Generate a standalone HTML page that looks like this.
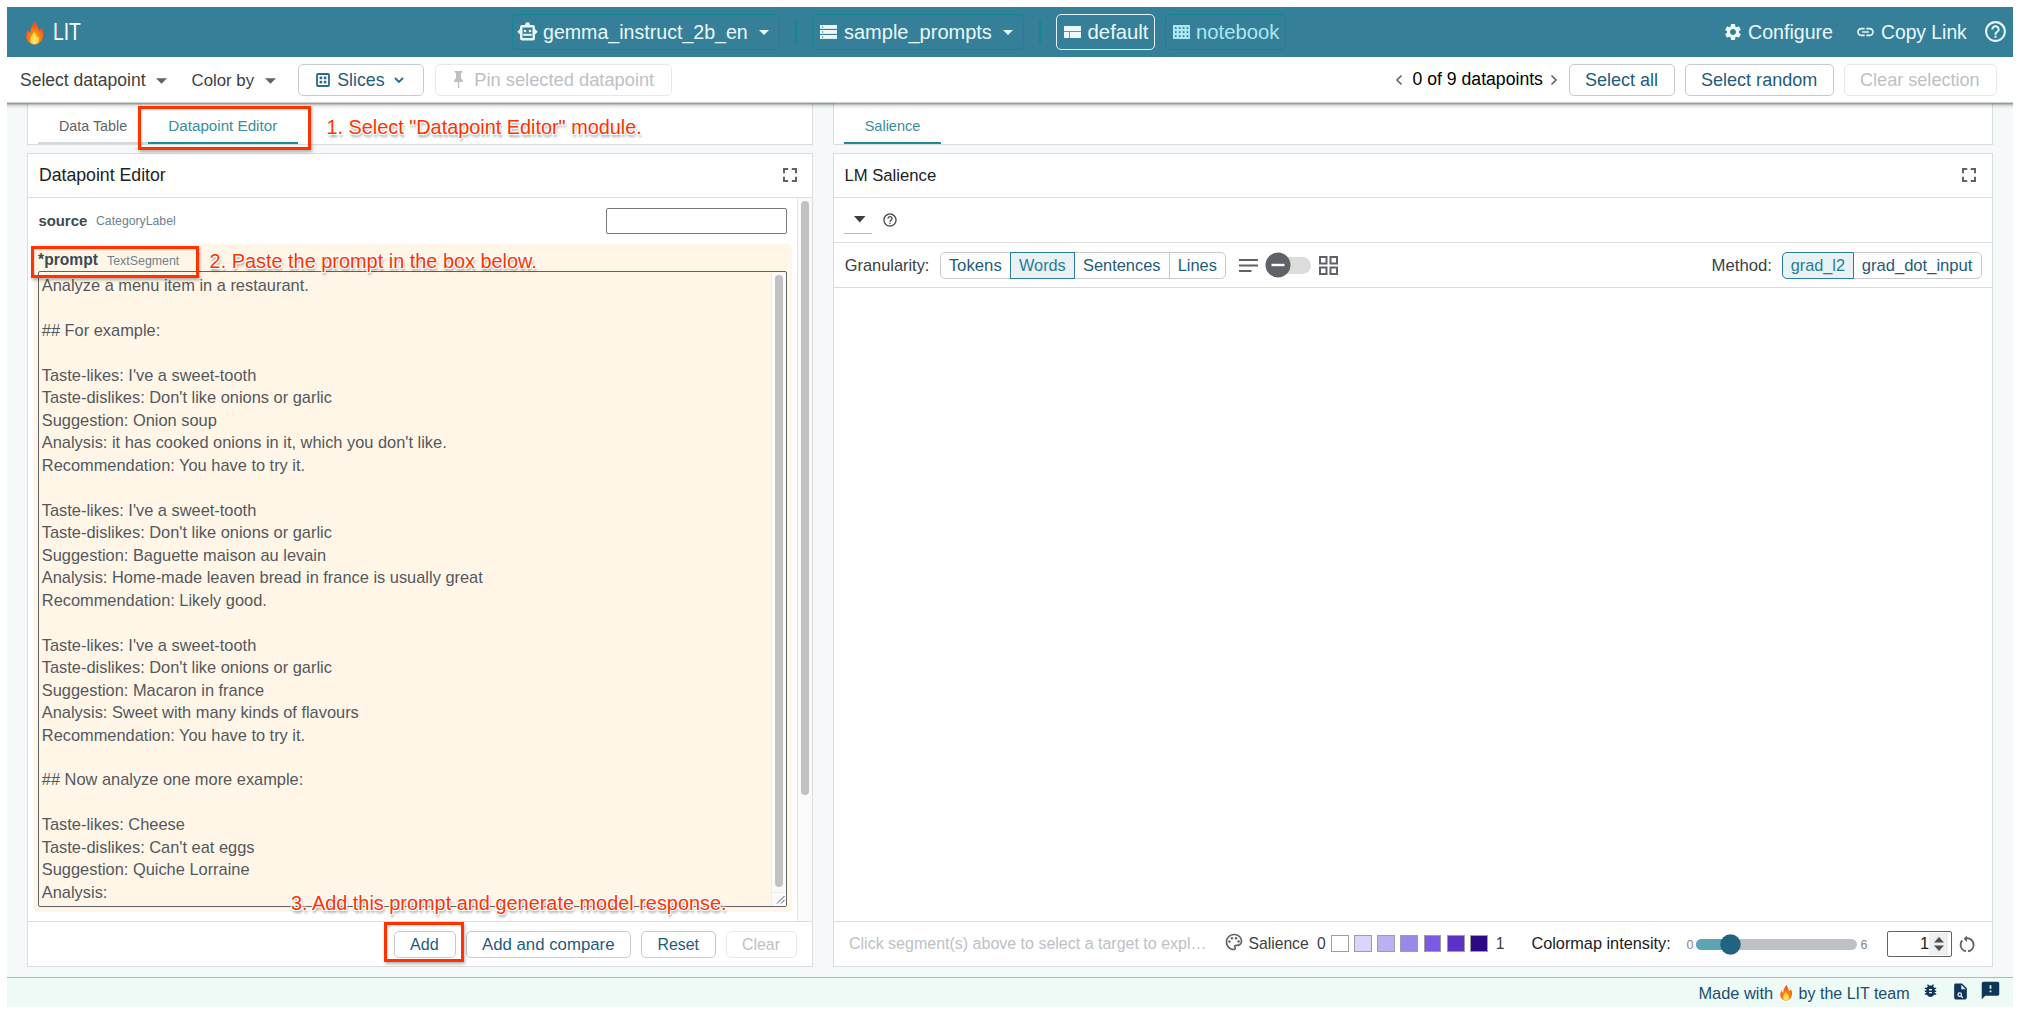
<!DOCTYPE html>
<html><head><meta charset="utf-8">
<style>
*{box-sizing:border-box;margin:0;padding:0}
html,body{width:2018px;height:1011px;background:#fff;overflow:hidden;font-family:"Liberation Sans",sans-serif;position:relative}
.abs{position:absolute}
.t{position:absolute;white-space:nowrap;line-height:1}
</style></head><body>
<div class="abs" style="left:7px;top:7px;width:2006px;height:1000px;background:#f5f9fa"></div>
<div class="abs" style="left:27px;top:103px;width:786px;height:42px;background:#fff;border:1px solid #dadce0;border-top:none"></div>
<div class="t " style="left:59.00px;top:118.00px;font-size:14.3px;line-height:16px;color:#5f6368;font-weight:400;">Data Table</div>
<div class="abs" style="left:38px;top:142px;width:110px;height:2px;background:#d5d8dc"></div>
<div class="t " style="left:168.30px;top:117.00px;font-size:15.2px;line-height:17px;color:#3a8d9b;font-weight:400;">Datapoint Editor</div>
<div class="abs" style="left:148px;top:142px;width:150px;height:2px;background:#1f8a96"></div>
<div class="abs" style="left:27px;top:153px;width:786px;height:814px;background:#fff;border:1px solid #dadce0"></div>
<div class="abs" style="left:28px;top:197px;width:784px;height:1px;background:#dadce0"></div>
<div class="t " style="left:38.90px;top:165.00px;font-size:17.7px;line-height:20px;color:#202124;font-weight:400;">Datapoint Editor</div>
<svg class="abs" style="left:782px;top:167px;" width="16" height="16" viewBox="0 0 16 16"><path d="M2 6.2 V2 H6.2 M9.8 2 H14 V6.2 M14 9.8 V14 H9.8 M6.2 14 H2 V9.8" fill="none" stroke="#5f6368" stroke-width="2" stroke-linecap="butt"/></svg>
<div class="abs" style="left:797px;top:198px;width:15px;height:723px;background:#fafafa;border-left:1px solid #e8e8e8"></div>
<div class="abs" style="left:801px;top:201px;width:8px;height:594px;background:#c1c1c1;border-radius:4px"></div>
<div class="t " style="left:38.40px;top:212.70px;font-size:14.9px;line-height:16px;color:#3c4a55;font-weight:700;">source</div>
<div class="t " style="left:96.00px;top:213.80px;font-size:12.25px;line-height:14px;color:#6b8290;font-weight:400;">CategoryLabel</div>
<div class="abs" style="left:606px;top:208px;width:181px;height:26px;border:1px solid #767676;border-radius:2px;background:#fff"></div>
<div class="abs" style="left:33px;top:244px;width:759px;height:667.5px;background:#fff6e8;border-radius:5px"></div>
<div class="t " style="left:38.10px;top:251.00px;font-size:15.6px;line-height:17px;color:#3c4a55;font-weight:700;">*prompt</div>
<div class="t " style="left:107.00px;top:253.50px;font-size:12.4px;line-height:14px;color:#6b8290;font-weight:400;">TextSegment</div>
<div class="abs" style="left:38px;top:271px;width:749px;height:636px;border:1px solid #5f6368;border-radius:2px"></div>
<div class="t " style="left:41.80px;top:275.70px;font-size:16.4px;line-height:18px;color:#54585d;font-weight:400;">Analyze a menu item in a restaurant.</div>
<div class="t " style="left:41.80px;top:320.68px;font-size:16.4px;line-height:18px;color:#54585d;font-weight:400;">## For example:</div>
<div class="t " style="left:41.80px;top:365.66px;font-size:16.4px;line-height:18px;color:#54585d;font-weight:400;">Taste-likes: I&#x27;ve a sweet-tooth</div>
<div class="t " style="left:41.80px;top:388.15px;font-size:16.4px;line-height:18px;color:#54585d;font-weight:400;">Taste-dislikes: Don&#x27;t like onions or garlic</div>
<div class="t " style="left:41.80px;top:410.64px;font-size:16.4px;line-height:18px;color:#54585d;font-weight:400;">Suggestion: Onion soup</div>
<div class="t " style="left:41.80px;top:433.13px;font-size:16.4px;line-height:18px;color:#54585d;font-weight:400;">Analysis: it has cooked onions in it, which you don&#x27;t like.</div>
<div class="t " style="left:41.80px;top:455.62px;font-size:16.4px;line-height:18px;color:#54585d;font-weight:400;">Recommendation: You have to try it.</div>
<div class="t " style="left:41.80px;top:500.60px;font-size:16.4px;line-height:18px;color:#54585d;font-weight:400;">Taste-likes: I&#x27;ve a sweet-tooth</div>
<div class="t " style="left:41.80px;top:523.09px;font-size:16.4px;line-height:18px;color:#54585d;font-weight:400;">Taste-dislikes: Don&#x27;t like onions or garlic</div>
<div class="t " style="left:41.80px;top:545.58px;font-size:16.4px;line-height:18px;color:#54585d;font-weight:400;">Suggestion: Baguette maison au levain</div>
<div class="t " style="left:41.80px;top:568.07px;font-size:16.4px;line-height:18px;color:#54585d;font-weight:400;">Analysis: Home-made leaven bread in france is usually great</div>
<div class="t " style="left:41.80px;top:590.56px;font-size:16.4px;line-height:18px;color:#54585d;font-weight:400;">Recommendation: Likely good.</div>
<div class="t " style="left:41.80px;top:635.54px;font-size:16.4px;line-height:18px;color:#54585d;font-weight:400;">Taste-likes: I&#x27;ve a sweet-tooth</div>
<div class="t " style="left:41.80px;top:658.03px;font-size:16.4px;line-height:18px;color:#54585d;font-weight:400;">Taste-dislikes: Don&#x27;t like onions or garlic</div>
<div class="t " style="left:41.80px;top:680.52px;font-size:16.4px;line-height:18px;color:#54585d;font-weight:400;">Suggestion: Macaron in france</div>
<div class="t " style="left:41.80px;top:703.01px;font-size:16.4px;line-height:18px;color:#54585d;font-weight:400;">Analysis: Sweet with many kinds of flavours</div>
<div class="t " style="left:41.80px;top:725.50px;font-size:16.4px;line-height:18px;color:#54585d;font-weight:400;">Recommendation: You have to try it.</div>
<div class="t " style="left:41.80px;top:770.48px;font-size:16.4px;line-height:18px;color:#54585d;font-weight:400;">## Now analyze one more example:</div>
<div class="t " style="left:41.80px;top:815.46px;font-size:16.4px;line-height:18px;color:#54585d;font-weight:400;">Taste-likes: Cheese</div>
<div class="t " style="left:41.80px;top:837.95px;font-size:16.4px;line-height:18px;color:#54585d;font-weight:400;">Taste-dislikes: Can&#x27;t eat eggs</div>
<div class="t " style="left:41.80px;top:860.44px;font-size:16.4px;line-height:18px;color:#54585d;font-weight:400;">Suggestion: Quiche Lorraine</div>
<div class="t " style="left:41.80px;top:882.93px;font-size:16.4px;line-height:18px;color:#54585d;font-weight:400;">Analysis:</div>
<div class="abs" style="left:771px;top:272.5px;width:15px;height:619.5px;background:#fafafa;border-left:1px solid #ececec"></div>
<div class="abs" style="left:775px;top:275px;width:8px;height:612px;background:#c1c1c1;border-radius:4px"></div>
<div class="abs" style="left:771px;top:892px;width:15px;height:13.5px;background:#fafafa;border-left:1px solid #ececec;border-top:1px solid #ececec"></div>
<svg class="abs" style="left:776px;top:895px;" width="9" height="9" viewBox="0 0 9 9"><path d="M8.5 1 L1 8.5 M8.5 5 L5 8.5" stroke="#555" stroke-width="1"/></svg>
<div class="abs" style="left:28px;top:921px;width:784px;height:1px;background:#dadce0"></div>
<div class="abs" style="left:394px;top:931px;width:62px;height:27px;border:1px solid #c7cacf;border-radius:5px;background:#fff"></div>
<div class="t " style="left:410.10px;top:935.10px;font-size:16.1px;line-height:18px;color:#1f5b7a;font-weight:400;">Add</div>
<div class="abs" style="left:466px;top:931px;width:165px;height:27px;border:1px solid #c7cacf;border-radius:5px;background:#fff"></div>
<div class="t " style="left:482.00px;top:935.10px;font-size:16.8px;line-height:19px;color:#1f5b7a;font-weight:400;">Add and compare</div>
<div class="abs" style="left:641px;top:931px;width:75px;height:27px;border:1px solid #c7cacf;border-radius:5px;background:#fff"></div>
<div class="t " style="left:657.50px;top:936.10px;font-size:15.9px;line-height:17px;color:#1f5b7a;font-weight:400;">Reset</div>
<div class="abs" style="left:726px;top:931px;width:71px;height:27px;border:1px solid #e6e8eb;border-radius:5px;background:#fff"></div>
<div class="t " style="left:742.00px;top:936.10px;font-size:15.9px;line-height:17px;color:#bdc1c6;font-weight:400;">Clear</div>
<div class="abs" style="left:833px;top:103px;width:1160px;height:42px;background:#fff;border:1px solid #dadce0;border-top:none"></div>
<div class="t " style="left:864.70px;top:118.20px;font-size:14.5px;line-height:16px;color:#3a8d9b;font-weight:400;">Salience</div>
<div class="abs" style="left:844px;top:142px;width:97px;height:2px;background:#1f8a96"></div>
<div class="abs" style="left:833px;top:153px;width:1160px;height:814px;background:#fff;border:1px solid #dadce0"></div>
<div class="abs" style="left:834px;top:197px;width:1158px;height:1px;background:#dadce0"></div>
<div class="t " style="left:844.40px;top:166.10px;font-size:16.7px;line-height:19px;color:#202124;font-weight:400;">LM Salience</div>
<svg class="abs" style="left:1961px;top:167px;" width="16" height="16" viewBox="0 0 16 16"><path d="M2 6.2 V2 H6.2 M9.8 2 H14 V6.2 M14 9.8 V14 H9.8 M6.2 14 H2 V9.8" fill="none" stroke="#5f6368" stroke-width="2" stroke-linecap="butt"/></svg>
<svg class="abs" style="left:854px;top:216px;" width="12" height="7" viewBox="0 0 12 7"><path d="M0 0 L11.5 0 L5.75 6.5Z" fill="#3c4043"/></svg>
<div class="abs" style="left:844px;top:233px;width:28px;height:1px;background:#b5b9be"></div>
<svg class="abs" style="left:882px;top:212px;" width="16" height="16" viewBox="0 0 24 24"><path fill="#4a4e52" d="M11 18h2v-2h-2v2zm1-16C6.48 2 2 6.48 2 12s4.48 10 10 10 10-4.48 10-10S17.52 2 12 2zm0 18c-4.41 0-8-3.59-8-8s3.59-8 8-8 8 3.59 8 8-3.59 8-8 8zm0-14c-2.21 0-4 1.79-4 4h2c0-1.1.9-2 2-2s2 .9 2 2c0 2-3 1.75-3 5h2c0-2.25 3-2.5 3-5 0-2.21-1.79-4-4-4z"/></svg>
<div class="abs" style="left:834px;top:242px;width:1158px;height:1px;background:#dadce0"></div>
<div class="t " style="left:844.70px;top:256.30px;font-size:16.4px;line-height:18px;color:#3c4043;font-weight:400;">Granularity:</div>
<div class="abs" style="left:940px;top:252px;width:286px;height:27px;border:1px solid #c7cacf;border-radius:5px;background:#fff"></div>
<div class="abs" style="left:1010px;top:252px;width:65px;height:27px;border:1px solid #2a7d99;background:#e8f1f4"></div>
<div class="abs" style="left:1169px;top:253px;width:1px;height:25px;background:#c7cacf"></div>
<div class="t " style="left:948.70px;top:256.30px;font-size:16.75px;line-height:19px;color:#1f5b7a;font-weight:400;">Tokens</div>
<div class="t " style="left:1019.00px;top:256.30px;font-size:16.3px;line-height:18px;color:#2a7a98;font-weight:400;">Words</div>
<div class="t " style="left:1083.00px;top:256.30px;font-size:16.4px;line-height:18px;color:#1f5b7a;font-weight:400;">Sentences</div>
<div class="t " style="left:1177.70px;top:256.30px;font-size:16.4px;line-height:18px;color:#1f5b7a;font-weight:400;">Lines</div>
<svg class="abs" style="left:1239px;top:259px;" width="19" height="13" viewBox="0 0 19 13"><g fill="#5f6368"><rect x="0" y="0" width="19" height="2"/><rect x="0" y="5.5" width="19" height="2"/><rect x="0" y="11" width="12.5" height="2"/></g></svg>
<div class="abs" style="left:1273px;top:256.5px;width:38px;height:17.0px;background:#dcdcdc;border-radius:9px"></div>
<svg class="abs" style="left:1265px;top:252px;" width="26" height="26" viewBox="0 0 26 26"><circle cx="13" cy="13" r="12.5" fill="#5f6368"/><rect x="6.5" y="11.8" width="13" height="2.4" fill="#fff"/></svg>
<svg class="abs" style="left:1319px;top:256px;" width="19" height="19" viewBox="0 0 19 19"><g fill="none" stroke="#5f6368" stroke-width="2"><rect x="1" y="1" width="6.5" height="6.5"/><rect x="11.5" y="1" width="6.5" height="6.5"/><rect x="1" y="11.5" width="6.5" height="6.5"/><rect x="11.5" y="11.5" width="6.5" height="6.5"/></g></svg>
<div class="t " style="left:1711.60px;top:256.30px;font-size:16.7px;line-height:19px;color:#3c4043;font-weight:400;">Method:</div>
<div class="abs" style="left:1782px;top:252px;width:200px;height:27px;border:1px solid #c7cacf;border-radius:5px;background:#fff"></div>
<div class="abs" style="left:1782px;top:252px;width:72px;height:27px;border:1px solid #2a7d99;background:#e8f1f4;border-radius:5px 0 0 5px"></div>
<div class="t " style="left:1790.70px;top:256.30px;font-size:16.3px;line-height:18px;color:#2a7a98;font-weight:400;">grad_l2</div>
<div class="t " style="left:1861.70px;top:256.30px;font-size:16.6px;line-height:19px;color:#1f5b7a;font-weight:400;">grad_dot_input</div>
<div class="abs" style="left:834px;top:287px;width:1158px;height:1px;background:#dadce0"></div>
<div class="abs" style="left:834px;top:921px;width:1158px;height:1px;background:#dadce0"></div>
<div class="t " style="left:849.00px;top:934.70px;font-size:16px;line-height:17px;color:#bdc1c6;font-weight:400;">Click segment(s) above to select a target to expl…</div>
<svg class="abs" style="left:1224px;top:932px;" width="20" height="20" viewBox="0 0 24 24"><path fill="#5f6368" d="M12 22C6.49 22 2 17.51 2 12S6.49 2 12 2s10 4.04 10 9c0 3.31-2.69 6-6 6h-1.77c-.28 0-.5.22-.5.5 0 .12.05.23.13.33.41.47.64 1.06.64 1.67 0 1.38-1.12 2.5-2.5 2.5zm0-18c-4.41 0-8 3.59-8 8s3.59 8 8 8c.28 0 .5-.22.5-.5 0-.16-.08-.28-.14-.35-.41-.46-.63-1.05-.63-1.65 0-1.38 1.12-2.5 2.5-2.5H16c2.210 0 4-1.79 4-4 0-3.86-3.590-7-8-7z"/><circle cx="6.5" cy="11.5" r="1.5" fill="#5f6368"/><circle cx="9.5" cy="7.5" r="1.5" fill="#5f6368"/><circle cx="14.5" cy="7.5" r="1.5" fill="#5f6368"/><circle cx="17.5" cy="11.5" r="1.5" fill="#5f6368"/></svg>
<div class="t " style="left:1248.50px;top:934.70px;font-size:15.7px;line-height:17px;color:#3c4043;font-weight:400;">Salience</div>
<div class="t " style="left:1316.90px;top:934.70px;font-size:15.7px;line-height:17px;color:#3c4043;font-weight:400;">0</div>
<div class="abs" style="left:1331.00px;top:934.5px;width:17.8px;height:17.5px;background:#ffffff;border:1px solid #9e9e9e"></div>
<div class="abs" style="left:1354.15px;top:934.5px;width:17.8px;height:17.5px;background:#dcd5fb;border:1px solid #9e9e9e"></div>
<div class="abs" style="left:1377.30px;top:934.5px;width:17.8px;height:17.5px;background:#bcaff4;border:1px solid #9e9e9e"></div>
<div class="abs" style="left:1400.45px;top:934.5px;width:17.8px;height:17.5px;background:#9a87ea;border:1px solid #9e9e9e"></div>
<div class="abs" style="left:1423.60px;top:934.5px;width:17.8px;height:17.5px;background:#7c58e3;border:1px solid #9e9e9e"></div>
<div class="abs" style="left:1446.75px;top:934.5px;width:17.8px;height:17.5px;background:#5c31c8;border:1px solid #9e9e9e"></div>
<div class="abs" style="left:1469.90px;top:934.5px;width:17.8px;height:17.5px;background:#2c0a86;border:1px solid #9e9e9e"></div>
<div class="t " style="left:1495.80px;top:934.70px;font-size:15.7px;line-height:17px;color:#3c4043;font-weight:400;">1</div>
<div class="t " style="left:1531.40px;top:933.70px;font-size:16.3px;line-height:18px;color:#202124;font-weight:400;">Colormap intensity:</div>
<div class="t " style="left:1686.50px;top:937.50px;font-size:12.5px;line-height:14px;color:#80868b;font-weight:400;">0</div>
<div class="abs" style="left:1696px;top:938.5px;width:161px;height:11.0px;background:#bdc1c6;border-radius:6px"></div>
<div class="abs" style="left:1696px;top:938.5px;width:34px;height:11.0px;background:#5aa5b1;border-radius:6px 0 0 6px"></div>
<svg class="abs" style="left:1719.5px;top:933.5px;" width="21" height="21" viewBox="0 0 21 21"><circle cx="10.5" cy="10.5" r="10.2" fill="#22637f"/></svg>
<div class="t " style="left:1860.60px;top:937.50px;font-size:12.5px;line-height:14px;color:#80868b;font-weight:400;">6</div>
<div class="abs" style="left:1887px;top:931px;width:65px;height:26px;border:1px solid #5f6368;border-radius:2px;background:#fff"></div>
<div class="t " style="left:1920.00px;top:933.70px;font-size:16.3px;line-height:18px;color:#202124;font-weight:400;">1</div>
<div class="abs" style="left:1929px;top:933px;width:19px;height:22px;background:#efefef"></div>
<svg class="abs" style="left:1933px;top:936px;" width="12" height="16" viewBox="0 0 12 16"><path d="M1 6.5 L6 1 L11 6.5Z M1 9.5 L6 15 L11 9.5Z" fill="#505050"/></svg>
<svg class="abs" style="left:1958px;top:935px;" width="18" height="19" viewBox="0 0 18 19"><path fill="none" stroke="#5f6368" stroke-width="1.9" d="M10 16.3 A6.5 6.5 0 0 0 15.6 9.8 A6.5 6.5 0 0 0 8.6 3.3 M7.9 16.3 A6.5 6.5 0 0 1 2.6 9.8 A6.5 6.5 0 0 1 4.3 5.4"/><path fill="#5f6368" d="M5.6 3.8 L9 0.6 L9 7 Z"/></svg>
<div class="abs" style="left:7px;top:977px;width:2006px;height:30px;background:#edfaf6;border-top:1.5px solid #7fcfcf"></div>
<div class="t " style="left:1698.40px;top:983.50px;font-size:16.4px;line-height:18px;color:#1d4e6f;font-weight:400;">Made with</div>
<svg class="abs" style="left:1779px;top:984px;" width="14" height="17" viewBox="0 0 19 25"><path d="M10.5 1 C11 5 14 7 14 11 C15 10 16 9 17 8 C18 11 19 14 18 17 C17 22 13 24.5 9.5 24.5 C5 24.5 1.5 21 1.2 16.5 C1 13.5 2 11 3 9.5 C3.5 11 4.5 12.5 5.5 13 C5 8 8 4 10.5 1 Z" fill="url(#fg1)"/>
<path d="M9.2 11.5 C10 14 12.5 15.5 12.5 18.5 C12.8 18 13.2 17.2 13.5 16.8 C14.5 18.5 14.2 24 9.5 24.3 C6 24.3 5 21.5 5.5 19 C6 16 8.5 14 9.2 11.5 Z" fill="url(#fg2)"/></svg>
<div class="t " style="left:1798.60px;top:984.50px;font-size:16px;line-height:17px;color:#1d4e6f;font-weight:400;">by the LIT team</div>
<svg class="abs" style="left:1922px;top:982px;" width="17" height="17" viewBox="0 0 24 24"><path fill="#0f3557" d="M20 8h-2.81c-.45-.78-1.07-1.45-1.82-1.96L17 4.41 15.59 3l-2.17 2.17C12.96 5.06 12.49 5 12 5s-.96.06-1.41.17L8.41 3 7 4.41l1.62 1.63C7.88 6.55 7.26 7.22 6.81 8H4v2h2.09c-.05.33-.09.66-.09 1v1H4v2h2v1c0 .34.04.67.09 1H4v2h2.81c1.04 1.79 2.97 3 5.19 3s4.15-1.21 5.19-3H20v-2h-2.09c.05-.33.09-.66.09-1v-1h2v-2h-2v-1c0-.34-.04-.67-.09-1H20V8zm-6 8h-4v-2h4v2zm0-4h-4v-2h4v2z"/></svg>
<svg class="abs" style="left:1951px;top:982px;" width="19" height="19" viewBox="0 0 24 24"><path fill="#0f3557" d="M14 2H6c-1.1 0-1.99.9-1.99 2L4 20c0 1.1.89 2 1.99 2H18c1.1 0 2-.9 2-2V8l-6-6zm-1 7V3.5L18.5 9H13z"/><circle cx="11" cy="16" r="2.2" fill="none" stroke="#edfaf6" stroke-width="1.6"/><path d="M12.6 17.6 L15 20" stroke="#edfaf6" stroke-width="1.6"/></svg>
<svg class="abs" style="left:1980px;top:980px;" width="21" height="21" viewBox="0 0 24 24"><path fill="#0f3557" d="M20 2H4c-1.1 0-1.99.9-1.99 2L2 22l4-4h14c1.1 0 2-.9 2-2V4c0-1.1-.9-2-2-2zm-7 12h-2v-2h2v2zm0-4h-2V6h2v4z"/></svg>
<div class="abs" style="left:7px;top:57px;width:2006px;height:45px;background:#fff"></div>
<div class="abs" style="left:7px;top:102px;width:2006px;height:8px;background:linear-gradient(to bottom,rgba(0,0,0,.06) 0%,rgba(0,0,0,.4) 20%,rgba(0,0,0,.16) 38%,rgba(0,0,0,.04) 65%,rgba(0,0,0,0) 100%)"></div>
<div class="t " style="left:20.00px;top:70.20px;font-size:17.5px;line-height:20px;color:#3c4043;font-weight:400;">Select datapoint</div>
<svg class="abs" style="left:156px;top:78px;" width="11" height="6" viewBox="0 0 10 5"><path d="M0 0 L10 0 L5 5Z" fill="#5f6368"/></svg>
<div class="t " style="left:191.60px;top:71.20px;font-size:16.8px;line-height:19px;color:#3c4043;font-weight:400;">Color by</div>
<svg class="abs" style="left:265px;top:78px;" width="11" height="6" viewBox="0 0 10 5"><path d="M0 0 L10 0 L5 5Z" fill="#5f6368"/></svg>
<div class="abs" style="left:298px;top:64px;width:126px;height:32px;border:1px solid #c7cacf;border-radius:5px"></div>
<svg class="abs" style="left:316px;top:73px;" width="14" height="14" viewBox="0 0 14 14"><rect x="1" y="1" width="12" height="12" fill="none" stroke="#2a6a8a" stroke-width="1.8" rx="1"/><g fill="#2a6a8a"><rect x="3.6" y="3.6" width="2.6" height="2.6"/><rect x="7.8" y="3.6" width="2.6" height="2.6"/><rect x="3.6" y="7.8" width="2.6" height="2.6"/><rect x="7.8" y="7.8" width="2.6" height="2.6"/></g></svg>
<div class="t " style="left:337.20px;top:70.20px;font-size:17.8px;line-height:20px;color:#1f5b7a;font-weight:400;">Slices</div>
<svg class="abs" style="left:394px;top:77px;" width="10" height="7" viewBox="0 0 10 7"><path d="M1 1 L5 5 L9 1" fill="none" stroke="#2a6a8a" stroke-width="1.8"/></svg>
<div class="abs" style="left:435px;top:64px;width:237px;height:32px;border:1px solid #e6e8eb;border-radius:5px"></div>
<svg class="abs" style="left:452px;top:70px;" width="13" height="19" viewBox="0 0 13 19"><path d="M2.5 1 H10.5 V2.8 H9 V8 L11 10.8 V12 H2 V10.8 L4 8 V2.8 H2.5Z" fill="#bdc1c6"/><rect x="5.8" y="11" width="1.5" height="7" fill="#bdc1c6"/></svg>
<div class="t " style="left:474.30px;top:69.20px;font-size:18.3px;line-height:21px;color:#bdc1c6;font-weight:400;">Pin selected datapoint</div>
<svg class="abs" style="left:1395px;top:74px;" width="8" height="12" viewBox="0 0 8 12"><path d="M6.5 1.5 L2 6 L6.5 10.5" fill="none" stroke="#5f6368" stroke-width="1.6"/></svg>
<div class="t " style="left:1412.50px;top:69.00px;font-size:17.65px;line-height:20px;color:#000000;font-weight:400;">0 of 9 datapoints</div>
<svg class="abs" style="left:1550px;top:74px;" width="8" height="12" viewBox="0 0 8 12"><path d="M1.5 1.5 L6 6 L1.5 10.5" fill="none" stroke="#5f6368" stroke-width="1.6"/></svg>
<div class="abs" style="left:1569px;top:64px;width:106px;height:32px;border:1px solid #c7cacf;border-radius:5px"></div>
<div class="t " style="left:1585.00px;top:70.00px;font-size:18px;line-height:20px;color:#1f5b7a;font-weight:400;">Select all</div>
<div class="abs" style="left:1685px;top:64px;width:149px;height:32px;border:1px solid #c7cacf;border-radius:5px"></div>
<div class="t " style="left:1701.00px;top:70.00px;font-size:18.05px;line-height:20px;color:#1f5b7a;font-weight:400;">Select random</div>
<div class="abs" style="left:1844px;top:64px;width:153px;height:32px;border:1px solid #e6e8eb;border-radius:5px"></div>
<div class="t " style="left:1860.00px;top:70.00px;font-size:18.1px;line-height:20px;color:#bdc1c6;font-weight:400;">Clear selection</div>
<div class="abs" style="left:7px;top:7px;width:2006px;height:50px;background:#357f98"></div>
<svg class="abs" style="left:25px;top:20px;" width="19" height="25" viewBox="0 0 19 25"><defs><radialGradient id="fg1" cx="50%" cy="75%" r="60%"><stop offset="0" stop-color="#ffb300"/><stop offset="1" stop-color="#f4511e"/></radialGradient>
<radialGradient id="fg2" cx="50%" cy="80%" r="60%"><stop offset="0" stop-color="#ffe082"/><stop offset="1" stop-color="#fdd835"/></radialGradient></defs>
<path d="M10.5 1 C11 5 14 7 14 11 C15 10 16 9 17 8 C18 11 19 14 18 17 C17 22 13 24.5 9.5 24.5 C5 24.5 1.5 21 1.2 16.5 C1 13.5 2 11 3 9.5 C3.5 11 4.5 12.5 5.5 13 C5 8 8 4 10.5 1 Z" fill="url(#fg1)"/>
<path d="M9.2 11.5 C10 14 12.5 15.5 12.5 18.5 C12.8 18 13.2 17.2 13.5 16.8 C14.5 18.5 14.2 24 9.5 24.3 C6 24.3 5 21.5 5.5 19 C6 16 8.5 14 9.2 11.5 Z" fill="url(#fg2)"/></svg>
<div class="t " style="left:53.00px;top:19.00px;font-size:23px;line-height:26px;color:#ffffff;font-weight:400;transform:scaleX(0.84);transform-origin:0 0;">LIT</div>
<div class="abs" style="left:512px;top:14px;width:268px;height:36px;border:1.5px solid #12878f;border-radius:5px"></div>
<svg class="abs" style="left:517px;top:22px;" width="21" height="19" viewBox="0 0 21 19"><g fill="#eaf8fb"><circle cx="10.5" cy="2.6" r="2.3"/><rect x="3" y="3" width="15" height="15.5" rx="2.2"/><path d="M3 7 L0.3 9.7 L3 12.5Z M18 7 L20.7 9.7 L18 12.5Z"/></g>
<rect x="5.5" y="5.5" width="10" height="10.5" fill="#357f98"/><g fill="#eaf8fb"><circle cx="8" cy="9" r="1.3"/><circle cx="13" cy="9" r="1.3"/><rect x="6.2" y="11.8" width="8.6" height="2"/></g></svg>
<div class="t " style="left:543.00px;top:21.20px;font-size:19.6px;line-height:22px;color:#eaf8fb;font-weight:400;">gemma_instruct_2b_en</div>
<svg class="abs" style="left:759px;top:30px;" width="10" height="5" viewBox="0 0 10 5"><path d="M0 0 L10 0 L5 5Z" fill="#eaf8fb"/></svg>
<div class="abs" style="left:795px;top:20px;width:2px;height:24px;background:#12878f"></div>
<div class="abs" style="left:812px;top:14px;width:212px;height:36px;border:1.5px solid #12878f;border-radius:5px"></div>
<svg class="abs" style="left:820px;top:24px;" width="17" height="15" viewBox="0 0 17 15"><g fill="#eaf8fb"><rect x="0" y="1" width="17" height="3.9"/><rect x="0" y="6" width="17" height="3.9"/><rect x="0" y="11" width="17" height="3.9"/></g><g fill="#357f98"><circle cx="2.6" cy="3" r="0.8"/><circle cx="2.6" cy="8" r="0.8"/><circle cx="2.6" cy="13" r="0.8"/></g></svg>
<div class="t " style="left:844.00px;top:21.20px;font-size:20px;line-height:22px;color:#eaf8fb;font-weight:400;">sample_prompts</div>
<svg class="abs" style="left:1003px;top:30px;" width="10" height="5" viewBox="0 0 10 5"><path d="M0 0 L10 0 L5 5Z" fill="#eaf8fb"/></svg>
<div class="abs" style="left:1039px;top:20px;width:2px;height:24px;background:#12878f"></div>
<div class="abs" style="left:1056px;top:14px;width:99px;height:36px;border:1.5px solid #e3f4f8;border-radius:5px"></div>
<svg class="abs" style="left:1064px;top:26px;" width="17" height="12" viewBox="0 0 17 12"><g fill="#eaf8fb"><rect x="0" y="0" width="17" height="5.2"/><rect x="0" y="6" width="5.2" height="6"/><rect x="6" y="6" width="11" height="6"/></g></svg>
<div class="t " style="left:1087.60px;top:21.20px;font-size:20.3px;line-height:22px;color:#eaf8fb;font-weight:400;">default</div>
<div class="abs" style="left:1165px;top:14px;width:121px;height:36px;border:1.5px solid #12878f;border-radius:5px"></div>
<svg class="abs" style="left:1173px;top:25px;" width="17" height="14" viewBox="0 0 17 14"><rect width="17" height="14" fill="#a9e8f3"/><g fill="#357f98"><rect x="2.0" y="2.2" width="1.6" height="1.8"/><rect x="2.0" y="6.2" width="1.6" height="1.8"/><rect x="2.0" y="10.2" width="1.6" height="1.8"/><rect x="5.9" y="2.2" width="1.6" height="1.8"/><rect x="5.9" y="6.2" width="1.6" height="1.8"/><rect x="5.9" y="10.2" width="1.6" height="1.8"/><rect x="9.8" y="2.2" width="1.6" height="1.8"/><rect x="9.8" y="6.2" width="1.6" height="1.8"/><rect x="9.8" y="10.2" width="1.6" height="1.8"/><rect x="13.7" y="2.2" width="1.6" height="1.8"/><rect x="13.7" y="6.2" width="1.6" height="1.8"/><rect x="13.7" y="10.2" width="1.6" height="1.8"/></g></svg>
<div class="t " style="left:1196.00px;top:21.20px;font-size:20.3px;line-height:22px;color:#a9e8f3;font-weight:400;">notebook</div>
<svg class="abs" style="left:1723px;top:22px;" width="20" height="20" viewBox="0 0 24 24"><path fill="#eaf8fb" d="M19.14 12.94c.04-.3.06-.61.06-.94 0-.32-.02-.64-.07-.94l2.03-1.58c.18-.14.23-.41.12-.61l-1.92-3.32c-.12-.22-.37-.29-.59-.22l-2.39.96c-.5-.38-1.03-.7-1.62-.94l-.36-2.54c-.04-.24-.24-.41-.48-.41h-3.84c-.24 0-.43.17-.47.41l-.36 2.54c-.59.24-1.13.57-1.62.94l-2.39-.96c-.22-.08-.47 0-.59.22L2.74 8.87c-.12.21-.08.47.12.61l2.03 1.58c-.05.3-.09.63-.09.94s.02.64.07.94l-2.03 1.58c-.18.14-.23.41-.12.61l1.92 3.32c.12.22.37.29.59.22l2.39-.96c.5.38 1.03.7 1.62.94l.36 2.54c.05.24.24.41.48.41h3.84c.24 0 .44-.17.47-.41l.36-2.54c.59-.24 1.13-.56 1.62-.94l2.39.96c.22.08.47 0 .59-.22l1.92-3.32c.12-.22.07-.47-.12-.61l-2.01-1.58zM12 15.6c-1.98 0-3.6-1.62-3.6-3.6s1.62-3.6 3.6-3.6 3.6 1.62 3.6 3.6-1.62 3.6-3.6 3.6z"/></svg>
<div class="t " style="left:1748.00px;top:21.20px;font-size:19.6px;line-height:22px;color:#eaf8fb;font-weight:400;">Configure</div>
<svg class="abs" style="left:1855px;top:22px;" width="21" height="20" viewBox="0 0 24 24"><path fill="#eaf8fb" d="M3.9 12c0-1.71 1.39-3.1 3.1-3.1h4V7H7c-2.76 0-5 2.24-5 5s2.24 5 5 5h4v-1.9H7c-1.71 0-3.1-1.39-3.1-3.1zM8 13h8v-2H8v2zm9-6h-4v1.9h4c1.71 0 3.1 1.39 3.1 3.1s-1.39 3.1-3.1 3.1h-4V17h4c2.76 0 5-2.24 5-5s-2.24-5-5-5z"/></svg>
<div class="t " style="left:1881.00px;top:22.20px;font-size:19.3px;line-height:21px;color:#eaf8fb;font-weight:400;">Copy Link</div>
<svg class="abs" style="left:1983px;top:19px;" width="25" height="25" viewBox="0 0 24 24"><path fill="#eaf8fb" d="M11 18h2v-2h-2v2zm1-16C6.48 2 2 6.48 2 12s4.48 10 10 10 10-4.48 10-10S17.52 2 12 2zm0 18c-4.41 0-8-3.59-8-8s3.59-8 8-8 8 3.59 8 8-3.59 8-8 8zm0-14c-2.21 0-4 1.79-4 4h2c0-1.1.9-2 2-2s2 .9 2 2c0 2-3 1.75-3 5h2c0-2.25 3-2.5 3-5 0-2.21-1.79-4-4-4z"/></svg>
<div class="t " style="left:326.50px;top:115.60px;font-size:19.85px;line-height:22px;color:#ff3300;font-weight:400;text-shadow:1px 0 0 #fff,-1px 0 0 #fff,0 1px 0 #fff,0 -1px 0 #fff,1px 1px 0 #fff,-1px -1px 0 #fff,1px -1px 0 #fff,-1px 1px 0 #fff,1px 2.5px 2.5px rgba(0,0,0,.4);">1. Select &quot;Datapoint Editor&quot; module.</div>
<div class="t " style="left:209.60px;top:250.20px;font-size:19.9px;line-height:22px;color:#ff3300;font-weight:400;text-shadow:1px 0 0 #fff,-1px 0 0 #fff,0 1px 0 #fff,0 -1px 0 #fff,1px 1px 0 #fff,-1px -1px 0 #fff,1px -1px 0 #fff,-1px 1px 0 #fff,1px 2.5px 2.5px rgba(0,0,0,.4);">2. Paste the prompt in the box below.</div>
<div class="t " style="left:290.90px;top:891.70px;font-size:19.9px;line-height:22px;color:#ff3300;font-weight:400;text-shadow:1px 0 0 #fff,-1px 0 0 #fff,0 1px 0 #fff,0 -1px 0 #fff,1px 1px 0 #fff,-1px -1px 0 #fff,1px -1px 0 #fff,-1px 1px 0 #fff,1px 2.5px 2.5px rgba(0,0,0,.4);">3. Add this prompt and generate model response.</div>
<div class="abs" style="left:138px;top:106px;width:173px;height:44px;border:3px solid #ff3300;box-shadow:1px 2px 3px rgba(0,0,0,.3), inset 1px 1px 2px rgba(0,0,0,.15);"></div>
<div class="abs" style="left:31px;top:245.5px;width:168px;height:32.0px;border:3px solid #ff3300;box-shadow:1px 2px 3px rgba(0,0,0,.3), inset 1px 1px 2px rgba(0,0,0,.15);"></div>
<div class="abs" style="left:384px;top:921.5px;width:79.5px;height:40.5px;border:3px solid #ff3300;box-shadow:1px 2px 3px rgba(0,0,0,.3), inset 1px 1px 2px rgba(0,0,0,.15);"></div>
</body></html>
